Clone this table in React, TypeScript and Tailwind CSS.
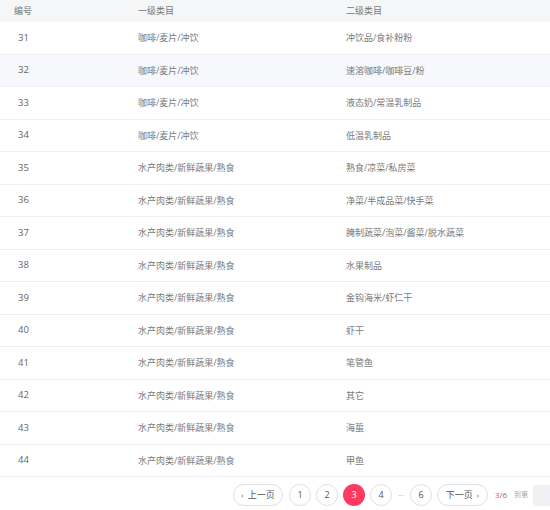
import React from "react";

const rows: Array<[number, string, string]> = [
  [31, "咖啡/麦片/冲饮", "冲饮品/食补粉粉"],
  [32, "咖啡/麦片/冲饮", "速溶咖啡/咖啡豆/粉"],
  [33, "咖啡/麦片/冲饮", "液态奶/常温乳制品"],
  [34, "咖啡/麦片/冲饮", "低温乳制品"],
  [35, "水产肉类/新鲜蔬果/熟食", "熟食/凉菜/私房菜"],
  [36, "水产肉类/新鲜蔬果/熟食", "净菜/半成品菜/快手菜"],
  [37, "水产肉类/新鲜蔬果/熟食", "腌制蔬菜/泡菜/酱菜/脱水蔬菜"],
  [38, "水产肉类/新鲜蔬果/熟食", "水果制品"],
  [39, "水产肉类/新鲜蔬果/熟食", "金钩海米/虾仁干"],
  [40, "水产肉类/新鲜蔬果/熟食", "虾干"],
  [41, "水产肉类/新鲜蔬果/熟食", "笔管鱼"],
  [42, "水产肉类/新鲜蔬果/熟食", "其它"],
  [43, "水产肉类/新鲜蔬果/熟食", "海蜇"],
  [44, "水产肉类/新鲜蔬果/熟食", "甲鱼"],
];

const font = { fontFamily: '"Open Sans", "Noto Sans CJK SC", sans-serif' };

function PageBtn({ children, active }: { children: React.ReactNode; active?: boolean }) {
  return (
    <div
      className={
        active
          ? "flex h-[22px] w-[22px] shrink-0 items-center justify-center rounded-full bg-[#fe3a5e] text-[9px] text-white"
          : "flex h-[22px] w-[22px] shrink-0 items-center justify-center rounded-full border border-[#dfe1e6] bg-white text-[9px] text-[#555]"
      }
    >
      {children}
    </div>
  );
}

export default function App() {
  return (
    <div className="h-[510px] w-[550px] overflow-hidden bg-white text-[#666]" style={font}>
      <div className="grid h-[22px] grid-cols-[124px_208px_1fr] items-center bg-[#f5f6f8] text-[9px] text-[#777]">
        <div className="pl-[14px]">编号</div>
        <div className="pl-[14px]">一级类目</div>
        <div className="pl-[14px]">二级类目</div>
      </div>
      {rows.map(([id, a, b]) => (
        <div
          key={id}
          className={
            "grid h-[32.5px] grid-cols-[124px_208px_1fr] items-center border-b border-[#f0f1f4] text-[9px] " +
            (id === 32 ? "bg-[#f7f8fb]" : "bg-white")
          }
        >
          <div className="pl-[18px] text-[9.5px] text-[#666]">{id}</div>
          <div className="pl-[14px] text-[#7a7a7a]">{a}</div>
          <div className="pl-[14px] text-[#7a7a7a]">{b}</div>
        </div>
      ))}
      <div className="flex items-center gap-[5px] pl-[233px] pt-[7px] whitespace-nowrap">
        <div className="mr-[1px] flex h-[22px] w-[50px] shrink-0 items-center justify-center gap-[4px] rounded-full border border-[#dfe1e6] text-[9px] text-[#555]">
          <span className="text-[8px]">‹</span>
          <span>上一页</span>
        </div>
        <PageBtn>1</PageBtn>
        <PageBtn>2</PageBtn>
        <PageBtn active>3</PageBtn>
        <PageBtn>4</PageBtn>
        <div className="w-[8px] shrink-0 text-center text-[7px] leading-none text-[#999]">···</div>
        <PageBtn>6</PageBtn>
        <div className="flex h-[22px] w-[51px] shrink-0 items-center justify-center gap-[4px] rounded-full border border-[#dfe1e6] text-[9px] text-[#555]">
          <span>下一页</span>
          <span className="text-[8px]">›</span>
        </div>
        <div className="ml-[2px] shrink-0 text-[8px]">
          <span className="text-[#fe3a5e]">3</span>
          <span className="text-[#777]">/6</span>
        </div>
        <div className="ml-[2px] shrink-0 text-[7px] text-[#aaa]">到第</div>
        <div className="h-[21px] w-[40px] shrink-0 rounded-[3px] bg-[#eff1f5]" />
      </div>
    </div>
  );
}
